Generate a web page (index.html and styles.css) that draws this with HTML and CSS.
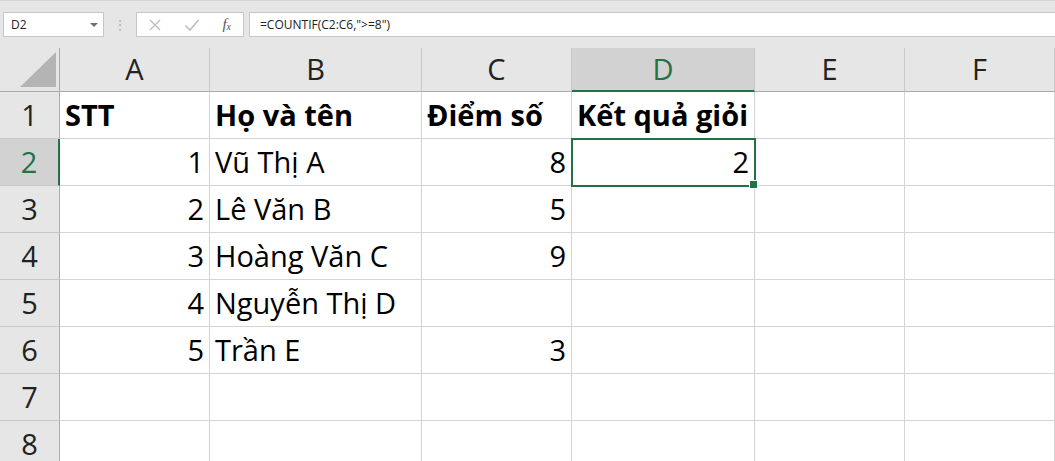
FILE: index.html
```html
<!DOCTYPE html>
<html>
<head>
    <meta charset="utf-8">
    <title>Book1 - Excel</title>
    <link rel="stylesheet" href="styles.css">
</head>
<body>
    <div class="formula-bar">
        <div class="name-box">
            <span>D2</span>
            <span class="caret"></span>
        </div>
        <div class="grip">⋮</div>
        <div class="fx-buttons">
            <svg class="fx-icon" width="14" height="14" viewBox="0 0 14 14">
                <path d="M2 2 L12 12 M12 2 L2 12" stroke="#bdbdbd" stroke-width="1.4" fill="none"/>
            </svg>
            <svg class="fx-icon" width="16" height="14" viewBox="0 0 16 14">
                <path d="M1.5 7.5 L6 12 L14.5 2" stroke="#bdbdbd" stroke-width="1.6" fill="none"/>
            </svg>
            <span class="fx">f<sub>x</sub></span>
        </div>
        <div class="formula-input">=COUNTIF(C2:C6,"&gt;=8")</div>
    </div>

    <div class="sheet">
        <div class="corner"><span class="select-all"></span></div>
        <div class="col-head">A</div>
        <div class="col-head">B</div>
        <div class="col-head">C</div>
        <div class="col-head active">D</div>
        <div class="col-head">E</div>
        <div class="col-head">F</div>

        <div class="row-head">1</div>
        <div class="cell bold">STT</div>
        <div class="cell bold">Họ và tên</div>
        <div class="cell bold">Điểm số</div>
        <div class="cell bold">Kết quả giỏi</div>
        <div class="cell"></div>
        <div class="cell"></div>

        <div class="row-head active">2</div>
        <div class="cell num">1</div>
        <div class="cell">Vũ Thị A</div>
        <div class="cell num">8</div>
        <div class="cell num selected">2</div>
        <div class="cell"></div>
        <div class="cell"></div>

        <div class="row-head">3</div>
        <div class="cell num">2</div>
        <div class="cell">Lê Văn B</div>
        <div class="cell num">5</div>
        <div class="cell"></div>
        <div class="cell"></div>
        <div class="cell"></div>

        <div class="row-head">4</div>
        <div class="cell num">3</div>
        <div class="cell">Hoàng Văn C</div>
        <div class="cell num">9</div>
        <div class="cell"></div>
        <div class="cell"></div>
        <div class="cell"></div>

        <div class="row-head">5</div>
        <div class="cell num">4</div>
        <div class="cell">Nguyễn Thị D</div>
        <div class="cell"></div>
        <div class="cell"></div>
        <div class="cell"></div>
        <div class="cell"></div>

        <div class="row-head">6</div>
        <div class="cell num">5</div>
        <div class="cell">Trần E</div>
        <div class="cell num">3</div>
        <div class="cell"></div>
        <div class="cell"></div>
        <div class="cell"></div>

        <div class="row-head">7</div>
        <div class="cell"></div>
        <div class="cell"></div>
        <div class="cell"></div>
        <div class="cell"></div>
        <div class="cell"></div>
        <div class="cell"></div>

        <div class="row-head">8</div>
        <div class="cell"></div>
        <div class="cell"></div>
        <div class="cell"></div>
        <div class="cell"></div>
        <div class="cell"></div>
        <div class="cell"></div>
    </div>
</body>
</html>
```

FILE: styles.css
```css
* {
    box-sizing: border-box;
}

html, body {
    height: 100%;
}

body {
    margin: 0;
    overflow: hidden;

    background-color: #e6e6e6;

    font-family: "Open Sans", "Noto Sans", sans-serif;
    color: #000000;
}

/* formula bar */

.formula-bar {
    display: flex;
    align-items: stretch;

    height: 48px;
    padding: 11px 0 11px 3px;

    border-top: 1px solid #d4d4d4;

    font-size: 12px;
}

.name-box {
    display: flex;
    align-items: center;
    justify-content: space-between;

    width: 101px;
    padding: 0 5px 0 7px;

    background-color: #ffffff;
    border: 1px solid #c6c6c6;

    color: #222222;
}

.caret {
    width: 0;
    height: 0;

    border-left: 4px solid transparent;
    border-right: 4px solid transparent;
    border-top: 4px solid #707070;
}

.grip {
    width: 32px;

    line-height: 25px;
    text-align: center;
    color: #b4b4b4;
    font-size: 14px;
}

.fx-buttons {
    display: flex;
    align-items: center;
    justify-content: space-between;

    width: 108px;
    padding: 0 12px 0 11px;

    background-color: #ffffff;
    border: 1px solid #c6c6c6;
}

.fx {
    font-family: "Liberation Serif", serif;
    font-style: italic;
    font-size: 15px;
    color: #555555;
}

.fx sub {
    font-size: 10px;
    vertical-align: -1px;
}

.formula-input {
    flex: 1;
    margin-left: 5px;
    padding-left: 10px;

    background-color: #ffffff;
    border: 1px solid #c6c6c6;
    border-right: none;

    line-height: 23px;
    color: #222222;
}

/* sheet grid */

.sheet {
    display: grid;
    grid-template-columns: 60px 150px 212px 150px 183px 150px 150px;
    grid-template-rows: 44px;
    grid-auto-rows: 47px;

    background-color: #ffffff;

    font-size: 29px;
}

.corner {
    position: relative;

    background-color: #e6e6e6;
    border-right: 1px solid #ababab;
    border-bottom: 1px solid #ababab;
}

.select-all {
    position: absolute;
    left: 20px;
    top: 4px;

    width: 36px;
    height: 35px;

    background-color: #b4b4b4;
    clip-path: polygon(100% 0, 100% 100%, 0 100%);
}

.col-head {
    background-color: #e6e6e6;
    border-right: 1px solid #c8c8c8;
    border-bottom: 1px solid #ababab;

    line-height: 41px;
    text-align: center;
    color: #222222;
}

.col-head.active {
    background-color: #d2d2d2;
    border-bottom: 2px solid #217346;
    color: #217346;
}

.row-head {
    background-color: #e6e6e6;
    border-right: 1px solid #ababab;
    border-bottom: 1px solid #c8c8c8;

    padding-top: 1px;
    line-height: 44px;
    text-align: center;
    color: #222222;
}

.row-head.active {
    background-color: #d2d2d2;
    border-right: 2px solid #217346;
    color: #217346;
}

.cell {
    padding: 1px 5px 0 5px;

    border-right: 1px solid #d4d4d4;
    border-bottom: 1px solid #d4d4d4;

    line-height: 44px;
    white-space: nowrap;
}

.bold {
    font-weight: bold;
}

.num {
    text-align: right;
}

.selected {
    position: relative;
    outline: 2px solid #217346;
    outline-offset: -1px;
}

.selected::after {
    content: "";
    position: absolute;
    right: -4px;
    bottom: -4px;

    width: 7px;
    height: 7px;

    background-color: #217346;
    border: 1px solid #ffffff;
}
```
